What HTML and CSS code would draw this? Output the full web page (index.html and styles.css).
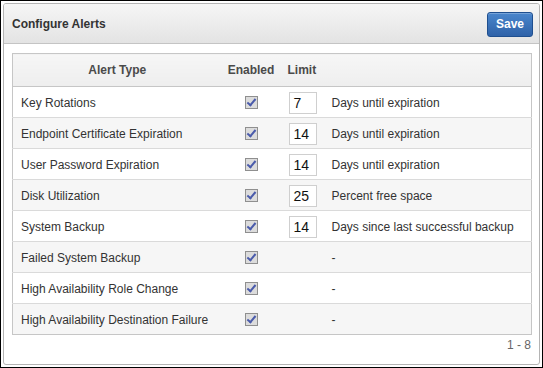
FILE: index.html
```html
<!DOCTYPE html>
<html>
<head>
<meta charset="utf-8">
<link rel="stylesheet" href="styles.css">
</head>
<body>
<div class="frame">
  <div class="panel">
    <div class="panel-head">
      <h1 class="title">Configure Alerts</h1>
      <button class="save">Save</button>
    </div>
    <div class="panel-body">
      <table class="grid">
        <colgroup>
          <col class="w-type"><col class="w-en"><col class="w-lim"><col>
        </colgroup>
        <thead>
          <tr>
            <th class="c-type">Alert Type</th>
            <th class="c-en">Enabled</th>
            <th class="c-lim">Limit</th>
            <th class="c-desc"></th>
          </tr>
        </thead>
        <tbody>
          <tr><td class="c-type">Key Rotations</td><td class="c-en"><span class="cb"></span></td><td class="c-lim"><span class="inp">7</span></td><td class="c-desc">Days until expiration</td></tr>
          <tr class="alt"><td class="c-type">Endpoint Certificate Expiration</td><td class="c-en"><span class="cb"></span></td><td class="c-lim"><span class="inp">14</span></td><td class="c-desc">Days until expiration</td></tr>
          <tr><td class="c-type">User Password Expiration</td><td class="c-en"><span class="cb"></span></td><td class="c-lim"><span class="inp">14</span></td><td class="c-desc">Days until expiration</td></tr>
          <tr class="alt"><td class="c-type">Disk Utilization</td><td class="c-en"><span class="cb"></span></td><td class="c-lim"><span class="inp">25</span></td><td class="c-desc">Percent free space</td></tr>
          <tr><td class="c-type">System Backup</td><td class="c-en"><span class="cb"></span></td><td class="c-lim"><span class="inp">14</span></td><td class="c-desc">Days since last successful backup</td></tr>
          <tr class="alt"><td class="c-type">Failed System Backup</td><td class="c-en"><span class="cb"></span></td><td class="c-lim"></td><td class="c-desc">-</td></tr>
          <tr><td class="c-type">High Availability Role Change</td><td class="c-en"><span class="cb"></span></td><td class="c-lim"></td><td class="c-desc">-</td></tr>
          <tr class="alt"><td class="c-type">High Availability Destination Failure</td><td class="c-en"><span class="cb"></span></td><td class="c-lim"></td><td class="c-desc">-</td></tr>
        </tbody>
      </table>
      <div class="pager">1 - 8</div>
    </div>
  </div>
</div>
</body>
</html>
```
FILE: styles.css
```css
html, body { margin: 0; padding: 0; background: #fff; }
body { font-family: "Liberation Sans", Arial, sans-serif; font-size: 12px; color: #333; }
.frame {
  width: 543px; height: 368px; box-sizing: border-box;
  border: 1px solid #000; padding: 2px; background: #fff;
}
.panel {
  height: 100%; box-sizing: border-box;
  border: 1px solid #b4b4b4; border-radius: 3px;
  display: flex; flex-direction: column; overflow: hidden;
}
.panel-head {
  height: 39px; border-bottom: 1px solid #c4c4c4;
  background: linear-gradient(#f6f6f6, #e3e3e3);
  display: flex; align-items: center; justify-content: space-between;
  padding: 0 6px 0 8px;
}
.title { margin: 0; font-size: 12px; font-weight: bold; color: #333; }
.save {
  width: 46px; height: 25px; margin-top: 1px;
  border: 1px solid #1f4f8f; border-radius: 3px;
  background: linear-gradient(#4a86cc, #2f62a8);
  color: #fff; font-family: "Liberation Sans", Arial, sans-serif;
  font-weight: bold; font-size: 12px; padding: 0;
  box-shadow: inset 0 1px 0 rgba(255,255,255,0.25);
}
.panel-body { padding: 9px 7px 0 8px; }
.grid {
  width: 520px; border-collapse: collapse; table-layout: fixed;
  border: 1px solid #c6c6c6;
}
.w-type { width: 209px; }
.w-en { width: 58px; }
.w-lim { width: 44px; }
.grid th, .grid td { box-sizing: border-box; }
.grid th {
  height: 33px; padding: 0; font-weight: bold; color: #4a4a4a;
  background: linear-gradient(#f6f6f6, #eeeeee);
  border-bottom: 1px solid #c6c6c6;
}
.grid td {
  height: 31px; padding: 2px 0 0; border-top: 1px solid #dadada; white-space: nowrap;
}
.grid tbody tr:first-child td { border-top: none; height: 31px; }
.grid tr.alt td { background: #f6f6f6; }
.grid .c-type { padding-left: 8px; text-align: left; }
.grid th.c-type { text-align: center; padding-left: 0; }
.grid .c-en { text-align: center; padding-left: 1px; }
.grid td.c-lim { padding-left: 9px; padding-top: 1px; text-align: left; }
.grid th.c-lim { padding-left: 8px; text-align: left; }
.grid .c-desc { padding-left: 8px; }
.cb {
  display: inline-block; width: 11px; height: 11px; vertical-align: middle;
  border: 1px solid #8f8f8f; background: #dcdcdc; position: relative;
  margin-top: -3px;
}
.cb::after {
  content: ""; position: absolute; left: 3px; top: 0px;
  width: 3px; height: 7px; border: solid #4a5bab; border-width: 0 2px 2px 0;
  transform: rotate(40deg);
}
.inp {
  display: inline-block; box-sizing: border-box; width: 28px; height: 22px;
  border: 1px solid #cfcfcf; background: #fff; vertical-align: middle;
  font-size: 14px; line-height: 20px; padding-left: 4px; color: #111;
}
.pager { text-align: right; color: #666; margin-top: 3px; padding-right: 1px; }
```
